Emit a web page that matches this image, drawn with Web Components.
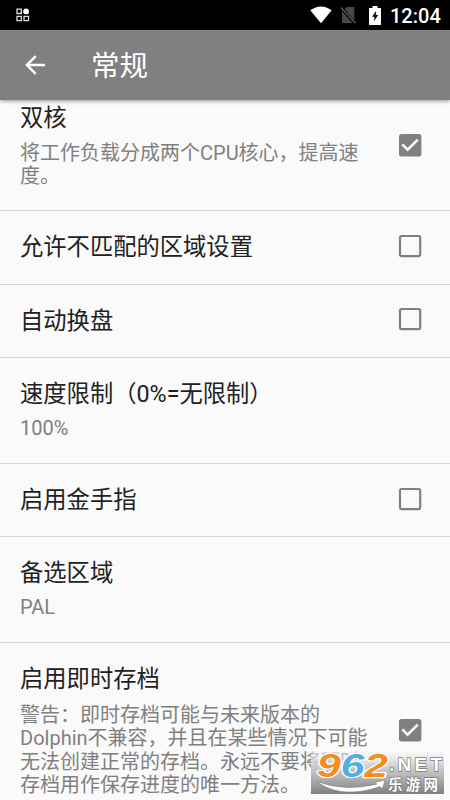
<!DOCTYPE html>
<html lang="zh-CN">
<head>
<meta charset="utf-8">
<title>常规</title>
<style>
html,body{margin:0;height:800px;overflow:hidden;background:#fafafa}
body{font-family:Roboto,"Noto Sans CJK SC",sans-serif}
</style>
</head>
<body>
<settings-screen></settings-screen>
<script>
const define=(name,html)=>{
  const t=document.createElement('template');t.innerHTML=html;
  customElements.define(name,class extends HTMLElement{
    constructor(){super();this.attachShadow({mode:'open'}).append(t.content.cloneNode(true))}
  });
};

define('status-bar',`<style>
:host{display:flex;height:30px;background:#000;align-items:center;padding:0 9px 0 16px;box-sizing:border-box;color:#fff}
.grid{margin-right:auto}
svg{display:block;flex:none}
.wifi{margin-right:8px}.sim{margin-right:12px}.bat{margin-right:9px}
time{font:500 20px/30px Roboto,sans-serif;width:51px;white-space:nowrap;padding-top:1px}
</style>
<svg class="grid" width="14" height="14" viewBox="0 0 14 14" fill="none" stroke="#ddd" stroke-width="1.3"><path d="M1 1.2h4.3v4.3H1zM1 8.4h4.3v4.3H1zM8 8.4h4.5v4.3H8z"/><circle cx="10.1" cy="3.4" r="2.9" fill="#fff" stroke="none"/></svg>
<svg class="wifi" width="22" height="18" viewBox="0 0 22 18"><path fill="#fff" d="M0.3 4.2Q11-3.4 21.7 4.2L11 17.3z"/></svg>
<svg class="sim" width="17" height="18" viewBox="0 0 17 18"><path fill="#484848" d="M6.5 1h7.8v13.2L4.6 3zM2 5.2L12.5 17H3.2Q2 17 2 15.8z"/><path d="M1 1.6L15.6 17.2" stroke="#555" stroke-width="1.5"/></svg>
<svg class="bat" width="12" height="19" viewBox="0 0 12 19"><path fill="#fff" d="M3.5 0h5v2H12v17H0V2h3.5z"/><path fill="#000" d="M7.2 4.8L3 10.8h2.5L5 15l4.2-6H6.7z"/></svg>
<time><slot></slot></time>`);

define('app-bar',`<style>
:host{display:flex;height:70px;background:#808080;align-items:center;color:#fff;box-shadow:0 1px 4px rgba(0,0,0,.42);position:relative;z-index:2;padding-left:25px;box-sizing:border-box}
svg{margin-right:45px;flex:none}
h1{margin:0;padding-top:4px;font-weight:400;font-size:28.5px;line-height:40px}
</style>
<svg width="21" height="20" viewBox="0 0 21 20" fill="none" stroke="#fff" stroke-width="2.4"><path d="M20 10H2M10.7 1.2L1.9 10l8.8 8.8"/></svg>
<h1><slot></slot></h1>`);

define('check-box',`<style>
:host{display:block;width:24px;height:24px;margin-bottom:2.6px}svg{display:block}
.on{display:none}:host([checked]) .on{display:block}:host([checked]) .off{display:none}
</style>
<svg class="off" width="24" height="24" viewBox="0 0 24 24"><rect x="2" y="2" width="20.2" height="20.2" rx="1.6" fill="none" stroke="#808080" stroke-width="2.2"/></svg>
<svg class="on" width="24" height="24" viewBox="0 0 24 24"><rect x="1" y="1" width="22.4" height="22.6" rx="2.5" fill="#808080"/><path d="M4.3 11.4l5.3 5.3L19.8 6.6" fill="none" stroke="#fafafa" stroke-width="2.6"/></svg>`);

define('pref-row',`<style>
:host{display:grid;grid-template-columns:1fr auto;align-items:center;box-sizing:border-box;padding:22px 28px 22.4px 20px;border-bottom:1px solid #d6d6d6}
:host([first]){padding-top:23px;padding-bottom:21.4px}
:host([last]){border:0}
.t{font-size:23.3px;line-height:28px;color:#212121;white-space:nowrap}
.s{display:block;font-size:20px;line-height:23.5px;color:#808080;white-space:nowrap}
::slotted([slot=summary]){display:block;margin-top:9px}
:host([long]) ::slotted([slot=summary]){margin-top:10.4px}
:host([first]) ::slotted([slot=summary]){margin-top:9.4px}
</style>
<div><div class="t"><slot></slot></div><div class="s"><slot name="summary"></slot></div></div>
<slot name="control"></slot>`);

define('site-mark',`<style>
:host{display:block;position:absolute;left:311px;top:750px;width:133px;height:44px}
svg{display:block;overflow:visible}
</style>
<svg width="133" height="44" viewBox="0 0 133 44">
<defs><linearGradient id="g" x1="0" y1="0" x2="0" y2="1"><stop offset="0" stop-color="#fafafa" stop-opacity=".45"/><stop offset=".3" stop-color="#d4d4d4" stop-opacity=".88"/><stop offset="1" stop-color="#808080"/></linearGradient></defs>
<rect width="133" height="44" fill="url(#g)"/>
<path d="M6 31.5Q34 42 66 34l-3-1.5L74 30l-2.5 9-2.5-2.5C45 45 22 44 6 31.5z" fill="#fff" stroke="#777" stroke-width=".6"/>
<g font-family="Liberation Sans,sans-serif" font-weight="700" font-style="italic" font-size="33" stroke="#fff" stroke-width="2.4" paint-order="stroke" stroke-linejoin="round">
<text x="6" y="27" textLength="71" lengthAdjust="spacingAndGlyphs"><tspan fill="#f68d1f">9</tspan><tspan fill="#55aee3">6</tspan><tspan fill="#f68d1f">2</tspan></text></g>
<g fill="#fff" stroke="#777" stroke-width="1.3" paint-order="stroke" font-weight="700">
<text x="78" y="21" font-family="Liberation Sans,sans-serif" font-size="19" textLength="53">.NET</text>
<text x="77" y="39.5" font-family="Noto Sans CJK SC,sans-serif" font-size="14.5" textLength="50">乐游网</text></g>
</svg>`);

define('settings-screen',`<style>
:host{display:block;width:450px;height:800px;overflow:hidden;position:relative;background:#fafafa}
main{display:flex;flex-direction:column;margin-top:-18.6px}
</style>
<status-bar>12:04</status-bar>
<app-bar>常规</app-bar>
<main>
<pref-row first long>双核<span slot="summary">将工作负载分成两个CPU核心，提高速<br>度。</span><check-box slot="control" checked></check-box></pref-row>
<pref-row>允许不匹配的区域设置<check-box slot="control"></check-box></pref-row>
<pref-row>自动换盘<check-box slot="control"></check-box></pref-row>
<pref-row>速度限制（0%=无限制）<span slot="summary">100%</span></pref-row>
<pref-row>启用金手指<check-box slot="control"></check-box></pref-row>
<pref-row>备选区域<span slot="summary">PAL</span></pref-row>
<pref-row last long>启用即时存档<span slot="summary">警告：即时存档可能与未来版本的<br>Dolphin不兼容，并且在某些情况下可能<br>无法创建正常的存档。永远不要将即时<br>存档用作保存进度的唯一方法。</span><check-box slot="control" checked></check-box></pref-row>
</main>
<site-mark></site-mark>`);
</script>
</body>
</html>
